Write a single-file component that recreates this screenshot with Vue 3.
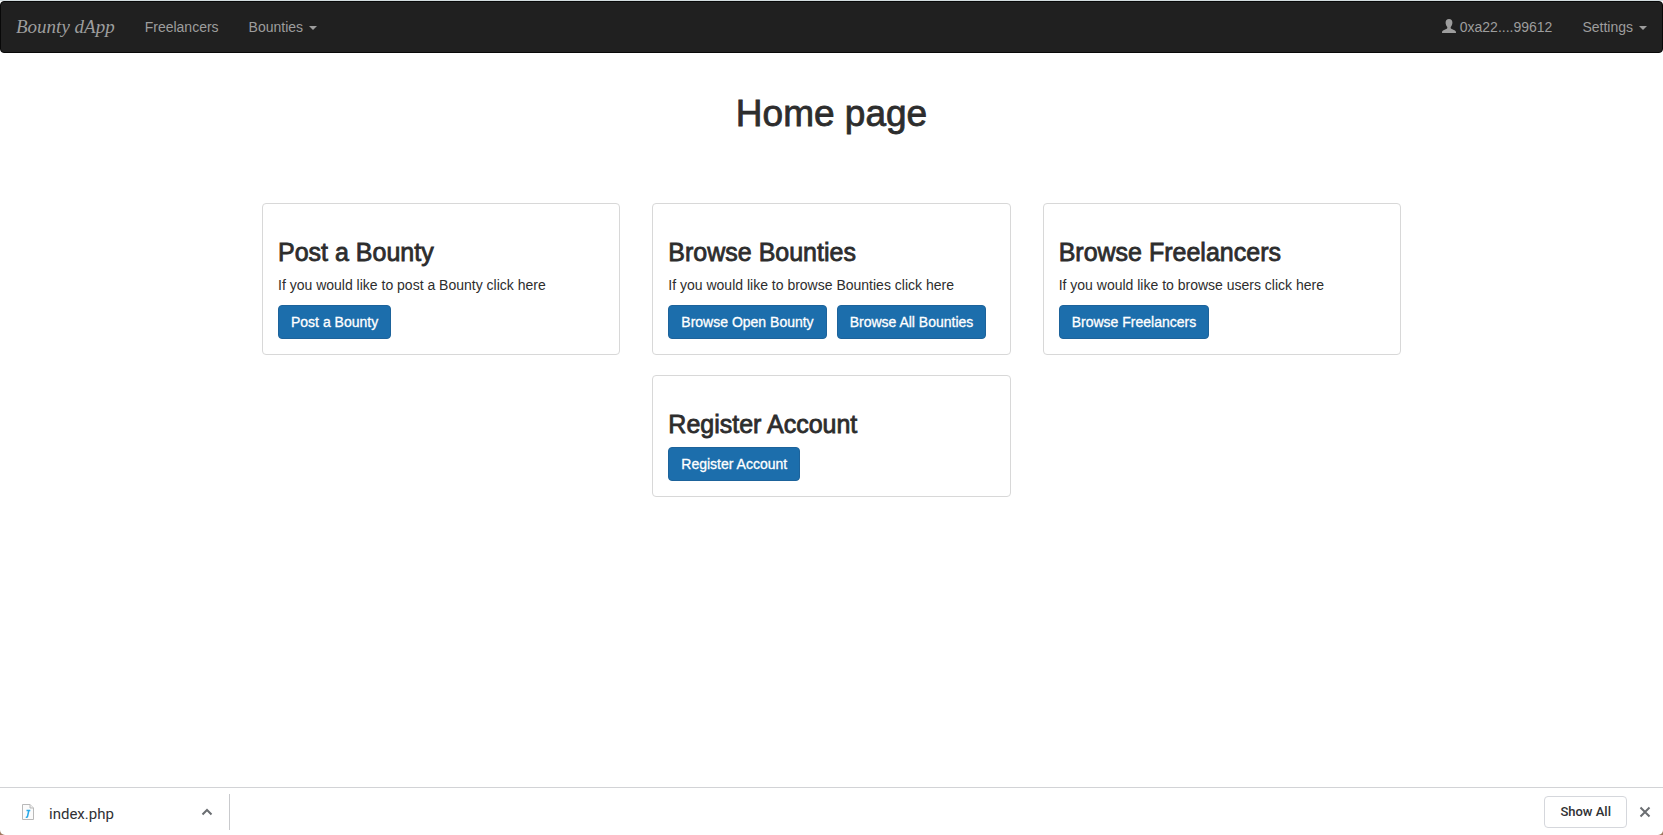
<script setup>
const cards = [
  { title: 'Post a Bounty', text: 'If you would like to post a Bounty click here', actions: ['Post a Bounty'] },
  { title: 'Browse Bounties', text: 'If you would like to browse Bounties click here', actions: ['Browse Open Bounty', 'Browse All Bounties'] },
  { title: 'Browse Freelancers', text: 'If you would like to browse users click here', actions: ['Browse Freelancers'] },
  { title: 'Register Account', text: '', actions: ['Register Account'], middle: true },
]
</script>

<template>
  <div class="page">
    <nav class="navbar">
      <a class="brand" href="#">Bounty dApp</a>
      <a class="nav-link" href="#">Freelancers</a>
      <a class="nav-link" href="#">Bounties<span class="caret"></span></a>
      <span class="spacer"></span>
      <a class="nav-link" href="#">
        <svg class="user" viewBox="0 0 14 14" aria-hidden="true">
          <path d="M7 0C4.800 0 3.500 1.600 3.600 3.800C3.700 5.700 4.300 6.800 5.100 7.700C5.500 8.500 5.300 9.400 4.700 9.700L1.500 11.200C.3 11.800 0 12.400 0 14H14C14 12.400 13.700 11.800 12.500 11.200L9.300 9.700C8.700 9.400 8.500 8.500 8.900 7.700C9.700 6.800 10.300 5.700 10.400 3.800C10.500 1.600 9.200 0 7 0Z" fill="currentColor" />
        </svg>0xa22....99612</a>
      <a class="nav-link" href="#">Settings<span class="caret"></span></a>
    </nav>

    <main class="container">
      <h1>Home page</h1>
      <div class="grid">
        <section v-for="card in cards" :key="card.title" class="card" :class="{ middle: card.middle }">
          <h2>{{ card.title }}</h2>
          <p v-if="card.text">{{ card.text }}</p>
          <div class="actions">
            <button v-for="label in card.actions" :key="label" type="button" class="btn">{{ label }}</button>
          </div>
        </section>
      </div>
    </main>

    <footer class="downloads">
      <div class="file">
        <svg class="doc" viewBox="0 0 12 16" aria-hidden="true">
          <path d="M.5 .5H8L11.500 4V15.500H.5Z" fill="#fbfbfb" stroke="#b9b9b9" />
          <path d="M8 .5V4H11.500" fill="#eee" stroke="#b9b9b9" />
          <path d="M4.500 6.500H8.300M6.800 6.500L5.500 12.500Q5.300 13.500 3.800 13.200" fill="none" stroke="#27a8e8" stroke-width="1.500" />
        </svg>
        <span class="name">index.php</span>
        <button type="button" class="icon-btn" aria-label="File options">
          <svg width="12" height="8" viewBox="0 0 12 8"><path d="M1.500 6.500L6 2L10.500 6.500" fill="none" stroke="#6b6e72" stroke-width="2" /></svg>
        </button>
      </div>
      <span class="spacer"></span>
      <button type="button" class="show-all">Show All</button>
      <button type="button" class="icon-btn" aria-label="Close">
        <svg width="12" height="12" viewBox="0 0 12 12"><path d="M1.500 1.500L10.500 10.500M10.500 1.500L1.500 10.500" fill="none" stroke="#6b6e72" stroke-width="2" /></svg>
      </button>
    </footer>
  </div>
</template>

<style>
body {
  margin: 0;
  background: #a0785f;
}
</style>

<style scoped>
.page {
  box-sizing: border-box;
  display: flex;
  flex-direction: column;
  min-height: 100vh;
  border-top: 1px solid #d3dcdf;
  border-radius: 0 0 5px 5px;
  background: #fff;
  font-family: "Liberation Sans", Arial, sans-serif;
  font-size: 14px;
  line-height: 20px;
  color: #2d2d2d;
}

.navbar {
  display: flex;
  align-items: center;
  height: 50px;
  border: 1px solid #080808;
  border-radius: 4px;
  background: #202020;
}

.brand,
.nav-link {
  padding: 0 15px;
  color: #9d9d9d;
  text-decoration: none;
  white-space: nowrap;
}

.brand {
  font-family: "Apple Chancery", "Liberation Serif", serif;
  font-size: 19px;
  font-style: italic;
}

.caret {
  display: inline-block;
  margin-left: 6px;
  border: 4px solid transparent;
  border-top-color: currentColor;
  border-bottom: 0;
  vertical-align: middle;
}

.user {
  width: 14px;
  height: 14px;
  margin-right: 4px;
  vertical-align: -1px;
}

.spacer {
  flex: 1;
}

.container {
  box-sizing: border-box;
  flex: 1;
  width: 100%;
  max-width: 1171px;
  margin: 0 auto;
  padding: 0 16px;
}

h1,
h2 {
  margin: 0;
  font-weight: 400;
  -webkit-text-stroke: 0.8px currentColor;
}

h1 {
  padding: 41px 0 69px;
  font-size: 37px;
  line-height: 40px;
  text-align: center;
}

h2 {
  padding: 20px 0 10px;
  font-size: 25px;
  line-height: 26px;
}

.grid {
  display: grid;
  grid-template-columns: repeat(3, 1fr);
  column-gap: 32px;
  row-gap: 20px;
}

.card {
  padding: 15px;
  border: 1px solid #d8d8d8;
  border-radius: 4px;
}

.card.middle {
  grid-column: 2;
}

p {
  margin: 0 0 10px;
}

.actions {
  display: flex;
  gap: 10px;
}

.btn {
  padding: 6px 12px;
  border: 1px solid #1d639b;
  border-radius: 4px;
  background: #1c6eac;
  color: #fff;
  font: inherit;
  white-space: nowrap;
  -webkit-text-stroke: 0.3px currentColor;
}

.downloads {
  display: flex;
  align-items: center;
  height: 47px;
  padding-right: 5px;
  border-top: 1px solid #d2d3d6;
}

.file {
  box-sizing: border-box;
  display: flex;
  align-items: center;
  width: 230px;
  height: 36px;
  padding: 0 9px 0 22px;
  border-right: 1px solid #c9cacd;
}

.doc {
  width: 12px;
  height: 16px;
}

.name {
  flex: 1;
  padding: 4px 0 0 15px;
  font-family: Roboto, sans-serif;
  font-size: 15px;
  color: #303134;
}

.icon-btn {
  display: flex;
  align-items: center;
  justify-content: center;
  width: 26px;
  height: 26px;
  padding: 0;
  border: 0;
  background: none;
}

.show-all {
  height: 32px;
  margin-right: 5px;
  padding: 0 15px;
  border: 1px solid #d5d7dc;
  border-radius: 4px;
  background: #fff;
  color: #303134;
  font-family: Roboto, sans-serif;
  font-size: 13px;
  font-weight: 500;
}
</style>
